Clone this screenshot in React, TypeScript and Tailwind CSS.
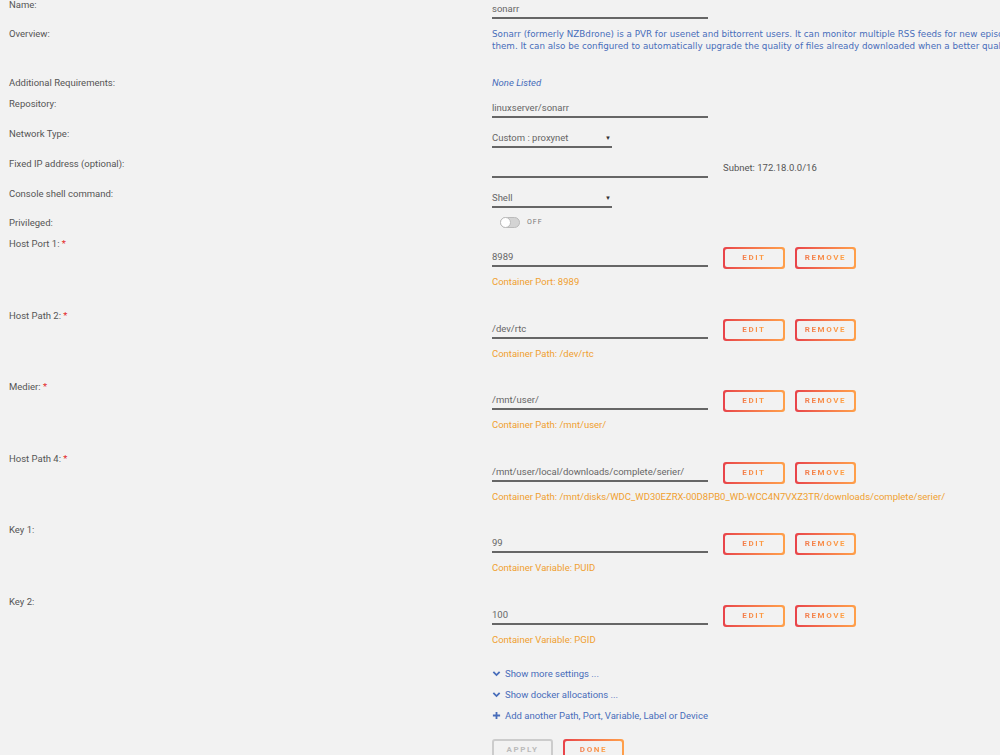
import React from "react";

const font = "font-['Roboto','Liberation_Sans',sans-serif]";

function Label({ text, req }: { text: string; req?: boolean }) {
  return (
    <div className="w-[492px] shrink-0 pl-[9px] leading-[14px] text-[#555]">
      {text}
      {req && <span className="text-[#e22828]"> *</span>}
    </div>
  );
}

function Input({ value, w = "w-[216px]" }: { value: string; w?: string }) {
  return (
    <div className={`${w} pt-[4px] pb-[1px] border-b-2 border-[#666] leading-[14px] text-[#666]`}>{value || "\u00a0"}</div>
  );
}

function Select({ value }: { value: string }) {
  return (
    <div className="w-[120px] pt-[4px] pb-[1px] border-b-2 border-[#666] leading-[14px] text-[#666] flex justify-between pr-[1px]">
      <span>{value}</span>
      <span className="text-[6px] text-[#333]">▼</span>
    </div>
  );
}

function GradBtn({ text, w }: { text: string; w: string }) {
  return (
    <div className={`${w} h-[22px] rounded-[3px] p-[2px] bg-linear-to-r from-[#e8434a] to-[#ffa04a]`}>
      <div className="h-full w-full rounded-[2px] bg-[#f2f2f2] flex items-center justify-center">
        <span className="text-[8px] font-bold tracking-[1.6px] bg-linear-to-r from-[#f27a4a] to-[#ffa040] bg-clip-text text-transparent">
          {text}
        </span>
      </div>
    </div>
  );
}

function ConfigRow({ label, value, note, req }: { label: string; value: string; note: string; req?: boolean }) {
  return (
    <div className="flex items-start h-[71.5px]">
      <Label text={label} req={req} />
      <div className="pt-[9px]">
        <div className="flex items-start">
          <Input value={value} />
          <div className="flex gap-[10px] ml-[15px] mt-[1px]">
            <GradBtn text="EDIT" w="w-[62px]" />
            <GradBtn text="REMOVE" w="w-[61px]" />
          </div>
        </div>
        <div className="mt-[6px] leading-[14px] text-[#f0a030] whitespace-nowrap">{note}</div>
      </div>
    </div>
  );
}

function Chevron() {
  return (
    <svg width="9" height="9" viewBox="0 0 10 10" className="mr-[4px]">
      <path d="M1.5 3.2 L5 6.7 L8.5 3.2" fill="none" stroke="#486dba" strokeWidth="2" />
    </svg>
  );
}

function Plus() {
  return (
    <svg width="9" height="9" viewBox="0 0 10 10" className="mr-[4px]">
      <path d="M5 1 V9 M1 5 H9" fill="none" stroke="#486dba" strokeWidth="2" />
    </svg>
  );
}

const rows = [
  { label: "Host Port 1:", value: "8989", note: "Container Port: 8989", req: true },
  { label: "Host Path 2:", value: "/dev/rtc", note: "Container Path: /dev/rtc", req: true },
  { label: "Medier:", value: "/mnt/user/", note: "Container Path: /mnt/user/", req: true },
  {
    label: "Host Path 4:",
    value: "/mnt/user/local/downloads/complete/serier/",
    note: "Container Path: /mnt/disks/WDC_WD30EZRX-00D8PB0_WD-WCC4N7VXZ3TR/downloads/complete/serier/",
    req: true,
  },
  { label: "Key 1:", value: "99", note: "Container Variable: PUID" },
  { label: "Key 2:", value: "100", note: "Container Variable: PGID" },
];

export default function App() {
  return (
    <div className={`w-[1000px] h-[755px] overflow-hidden bg-[#f2f2f2] text-[9.5px] ${font}`}>
      <div className="-mt-[2px]">
        <div className="flex items-start h-[29px]">
          <Label text="Name:" />
          <Input value="sonarr" />
        </div>
        <div className="flex items-start h-[49px]">
          <Label text="Overview:" />
          <div className="pt-[1px] text-[#486dba] leading-[12px] whitespace-nowrap font-['DejaVu_Sans',sans-serif] text-[8.75px]">
            <div>
              Sonarr (formerly NZBdrone) is a PVR for usenet and bittorrent users. It can monitor multiple RSS feeds for new episodes of your favorite shows and will grab, sort and rename
            </div>
            <div>
              them. It can also be configured to automatically upgrade the quality of files already downloaded when a better quality format becomes available.
            </div>
          </div>
        </div>
        <div className="flex items-start h-[21px]">
          <Label text="Additional Requirements:" />
          <div className="leading-[14px] italic text-[#486dba]">None Listed</div>
        </div>
        <div className="flex items-start h-[30px]">
          <Label text="Repository:" />
          <Input value="linuxserver/sonarr" />
        </div>
        <div className="flex items-start h-[30px]">
          <Label text="Network Type:" />
          <Select value="Custom : proxynet" />
        </div>
        <div className="flex items-start h-[30px]">
          <Label text="Fixed IP address (optional):" />
          <Input value="" />
          <div className="ml-[15px] pt-[4px] leading-[14px] text-[#555]">Subnet: 172.18.0.0/16</div>
        </div>
        <div className="flex items-start h-[29px]">
          <Label text="Console shell command:" />
          <Select value="Shell" />
        </div>
        <div className="flex items-start h-[21px]">
          <Label text="Privileged:" />
          <div className="flex items-center gap-[7px] pl-[8px] h-[12px]">
            <div className="w-[20px] h-[11px] rounded-full bg-[#d4d4d4] border border-[#bbb] flex items-center">
              <div className="w-[11px] h-[11px] rounded-full bg-white border border-[#bbb] -ml-[1px]" />
            </div>
            <span className="text-[7px] tracking-[1px] text-[#777]">OFF</span>
          </div>
        </div>
        {rows.map((r) => (
          <ConfigRow key={r.label} {...r} />
        ))}
        <div className="pl-[492px] -mt-[3px] text-[#486dba] leading-[14px]">
          <div className="flex items-center h-[21px]">
            <Chevron />
            Show more settings ...
          </div>
          <div className="flex items-center h-[21px]">
            <Chevron />
            Show docker allocations ...
          </div>
          <div className="flex items-center h-[21px]">
            <Plus />
            Add another Path, Port, Variable, Label or Device
          </div>
          <div className="flex gap-[10px] mt-[13px]">
            <div className="w-[61px] h-[22px] rounded-[3px] border-2 border-[#ccc] flex items-center justify-center">
              <span className="text-[8px] font-bold tracking-[1.6px] text-[#bbb]">APPLY</span>
            </div>
            <GradBtn text="DONE" w="w-[61px]" />
          </div>
        </div>
      </div>
    </div>
  );
}
